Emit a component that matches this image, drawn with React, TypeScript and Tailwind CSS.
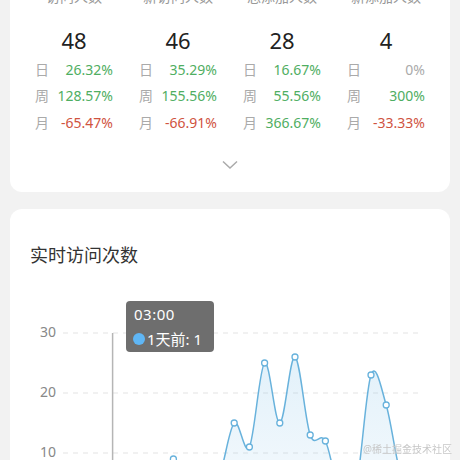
import React from "react";

const font = { fontFamily: '"Noto Sans", "Noto Sans CJK SC", sans-serif' };

interface Stat {
  label: string;
  value: string;
  day: string;
  week: string;
  month: string;
}

const stats: Stat[] = [
  { label: "访问人数", value: "48", day: "26.32%", week: "128.57%", month: "-65.47%" },
  { label: "新访问人数", value: "46", day: "35.29%", week: "155.56%", month: "-66.91%" },
  { label: "总添加人数", value: "28", day: "16.67%", week: "55.56%", month: "366.67%" },
  { label: "新添加人数", value: "4", day: "0%", week: "300%", month: "-33.33%" },
];

const data = [3, 2, 1, 1, 0, 2, 5, 9, 5, 4, 6, 15, 11, 25, 15, 26, 13, 12, 3, 4, 23, 18, 6, 4];

const px = (i: number) => 57 + 15.2 * i;
const py = (v: number) => 221 - 6 * v;

function smoothPath(pts: [number, number][]) {
  let d = `M${pts[0][0]},${pts[0][1]}`;
  for (let i = 0; i < pts.length - 1; i++) {
    const p0 = pts[i - 1] || pts[i];
    const p1 = pts[i];
    const p2 = pts[i + 1];
    const p3 = pts[i + 2] || p2;
    const c1x = p1[0] + (p2[0] - p0[0]) / 6;
    const c1y = p1[1] + (p2[1] - p0[1]) / 6;
    const c2x = p2[0] - (p3[0] - p1[0]) / 6;
    const c2y = p2[1] - (p3[1] - p1[1]) / 6;
    d += ` C${c1x},${c1y} ${c2x},${c2y} ${p2[0]},${p2[1]}`;
  }
  return d;
}

function rateColor(v: string) {
  if (v === "0%") return "text-[#aaa]";
  if (v.startsWith("-")) return "text-[#d0533f]";
  return "text-[#4fae62]";
}

function StatColumn({ s }: { s: Stat }) {
  const rows: [string, string][] = [
    ["日", s.day],
    ["周", s.week],
    ["月", s.month],
  ];
  return (
    <div className="flex flex-col">
      <div className="text-center text-[14px] leading-[20px] text-[#999]">{s.label}</div>
      <div className="mt-[18px] text-center text-[22px] leading-[30px] text-[#222]">{s.value}</div>
      <div className="mt-[1px]">
        {rows.map(([k, v]) => (
          <div key={k} className="flex h-[26.5px] items-center justify-between px-[13px] text-[14px]">
            <span className="text-[#aaa]">{k}</span>
            <span className={rateColor(v)}>{v}</span>
          </div>
        ))}
      </div>
    </div>
  );
}

function Chart() {
  const pts = data.map((v, i) => [px(i), py(v)] as [number, number]);
  const line = smoothPath(pts);
  const area = `${line} L${pts[pts.length - 1][0]},221 L${pts[0][0]},221 Z`;
  return (
    <div className="relative mt-[24px] h-[260px]">
      <svg width="440" height="260" className="block">
        <defs>
          <linearGradient id="fill" x1="0" y1="0" x2="0" y2="1">
            <stop offset="0" stopColor="#8cc6ea" stopOpacity="0.25" />
            <stop offset="1" stopColor="#8cc6ea" stopOpacity="0.08" />
          </linearGradient>
        </defs>
        {[30, 20, 10, 0].map((v) => (
          <g key={v}>
            <line x1="53" x2="412" y1={py(v)} y2={py(v)} stroke="#e3e3e3" strokeDasharray="5 5" />
            <text x="46" y={py(v)} textAnchor="end" dominantBaseline="middle" fontSize="14" fill="#888" style={font}>
              {v}
            </text>
          </g>
        ))}
        <line x1={px(3)} x2={px(3)} y1="41" y2="221" stroke="#b5b5b5" strokeWidth="1.5" />
        <path d={area} fill="url(#fill)" />
        <path d={line} fill="none" stroke="#68b2dc" strokeWidth="1.5" />
        {pts.map(([x, y], i) => (
          <circle key={i} cx={x} cy={y} r="3" fill="#fff" stroke="#68b2dc" strokeWidth="1.3" />
        ))}
      </svg>
      {/* tooltip */}
      <div className="absolute left-[116px] top-[9px] h-[51px] w-[88px] rounded-[4px] bg-[#666]/95 px-[8px] text-[15px] text-white">
        <div className="mt-[3px] leading-[20px] tracking-[0.5px]">03:00</div>
        <div className="mt-[5px] flex items-center gap-[2px] leading-[20px]">
          <span className="ml-[-1px] h-[12px] w-[12px] shrink-0 rounded-full bg-[#5fb6f5]" />
          <span>1天前: 1</span>
        </div>
      </div>
    </div>
  );
}

export default function App() {
  return (
    <div className="h-screen overflow-hidden bg-[#f2f2f2] px-[10px]" style={font}>
      <div className="-mt-[33px]">
        <div className="rounded-[12px] bg-white px-[12px] pt-[20px] pb-[22px]">
          <div className="grid grid-cols-4">
            {stats.map((s) => (
              <StatColumn key={s.label} s={s} />
            ))}
          </div>
          <div className="mt-[24px] flex justify-center">
            <svg width="16" height="10" viewBox="0 0 16 10">
              <path d="M1 1.5 L8 8 L15 1.5" fill="none" stroke="#aaa" strokeWidth="1.5" />
            </svg>
          </div>
        </div>
        <div className="mt-[17px] rounded-[12px] bg-white pt-[33px]">
          <div className="pl-[20px] text-[18px] leading-[26px] text-[#333]">实时访问次数</div>
          <Chart />
        </div>
      </div>
      <div className="fixed bottom-[3px] right-[8px] text-[10px] text-[#c8c8c8]">@稀土掘金技术社区</div>
    </div>
  );
}
